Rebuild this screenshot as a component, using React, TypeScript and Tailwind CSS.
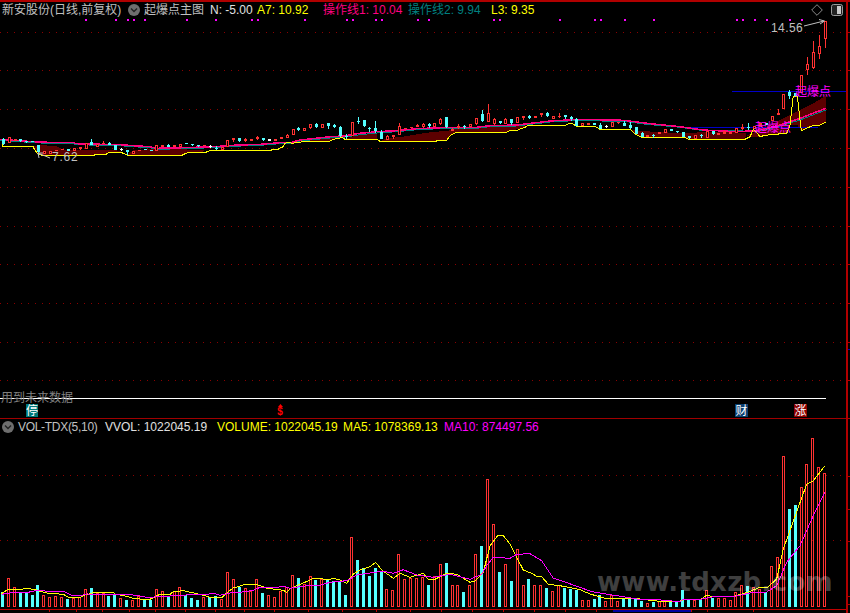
import React from "react";

type C = [string, number, number, number?, number?];
type P = number[];

const pts = (ox: number, oy: number, a: P) => {
  const out: string[] = [];
  for (let i = 0; i < a.length; i += 2) out.push(`${(ox + a[i] / 3).toFixed(1)},${(oy + a[i + 1] / 3).toFixed(1)}`);
  return out;
};
const join3 = (a: P, b: P, c: P) => [...pts(0, 110, a), ...pts(290, 95, b), ...pts(580, 10, c)].join(" ");

const yellowTop = join3(
  [6,100,8,108,99,108,103,118,112,130,125,136,282,136,282,133,318,133,318,130,336,127,362,127,375,132,382,136,546,136,555,131,567,127,620,127,620,124,640,121,815,121,815,118,834,118,834,115,847,113,853,103,860,97,870,97],
  [5,145,33,141,33,138,120,138,130,133,148,130,155,127,165,133,260,133,270,139,440,139,440,136,470,136,480,122,492,115,500,112,650,112,660,107,685,105,695,100,705,97,715,91,825,91,835,87,845,85,858,93,870,95],
  [0,349,45,349,60,358,150,358,165,372,185,382,315,382,325,388,495,388,510,380,520,358,530,367,540,380,555,376,585,373,620,370,630,345,640,258,652,258,660,330,664,362,680,355,695,348,720,345,737,337]
);
const pinkTop = join3(
  [0,88,100,95,145,97,220,97,225,101,360,104,400,107,450,110,470,115,550,113,640,110,700,106,780,103,840,98,870,97],
  [5,142,30,135,60,132,120,125,160,123,210,115,260,110,320,107,380,101,430,99,490,97,560,97,600,92,680,90,780,78,870,73],
  [0,328,130,331,170,336,220,342,300,350,370,360,470,365,530,362,600,345,660,325,737,295]
);
const tealTop = join3(
  [0,91,100,98,145,100,220,100,225,104,360,107,400,110,450,113,470,118,550,116,640,113,700,109,780,106,840,101,870,100],
  [5,145,30,138,60,135,120,129,160,127,210,119,260,114,320,110,380,104,430,102,490,100,560,100,600,95,680,93,780,81,870,76],
  [0,332,130,334,200,343,300,352,380,363,470,362,530,365,600,348,660,330,737,300]
);

const fills: string[] = [
  pts(0, 110, [100,110,115,106,165,107,190,119,340,119,365,125,375,132,362,127,336,127,318,133,282,136,125,136,112,130]).join(" "),
  pts(0, 110, [382,136,400,120,450,118,470,116,550,118,620,122,620,124,567,127,546,136]).join(" "),
  pts(290, 95, [30,137,70,128,120,125,155,125,148,130,120,138,33,138]).join(" "),
  pts(290, 95, [165,132,210,118,260,115,262,133]).join(" "),
  pts(290, 95, [270,139,290,130,340,125,380,118,420,112,440,110,470,108,500,100,650,95,710,93,695,100,660,107,650,112,500,112,480,122,470,136,440,136,440,139]).join(" "),
  pts(580, 10, [150,358,175,362,230,366,320,370,370,366,500,368,495,388,325,388,315,382,185,382,165,372]).join(" "),
  pts(580, 10, [500,376,540,360,600,330,660,300,700,280,737,258,737,337,720,345,695,348,680,355,664,362,652,345,630,345,620,370,585,373,555,376,540,380,510,380]).join(" "),
];

const c1: C[] = [
  ["c",87,103,84,106],["r",82,100],["f",88,94],["c",87,93,87,97],["c",93,97,93,100],["c",93,97],["c",105,125,105,135],["r",124,131],["r",124,131],["f",120,124],["f",117,119],["c",117,122],["r",115,122],["f",112,117,112,120],["r",98,116],["c",97,104,87,104],["r",102,110],["f",98,100,94,100],["c",100,106,97,106],["c",105,120],["w",118,120,115,124],["c",120,125,120,135],["r",123,131],["f",119,124],["c",118,120],["c",120,122],["r",106,124],["f",106,111],["c",106,110,102,110],["f",106,111],["r",103,110],["c",100,103],["c",102,104,102,107],["c",106,108,106,112],["f",106,108],["w",107,108,104,113],["c",113,116,108,120],["r",112,119],["r",90,112],["f",85,91,85,96],["c",83,92,83,96],["f",87,92,84,96],["r",88,94],["f",82,87,78,90],["c",83,89,83,93],["w",86,92],["f",88,92],["f",82,87],["r",76,83,72,83],
];
const c2: C[] = [
  ["r",102,119],["c",100,105,96,109],["r",100,109],["r",88,98,88,101],["c",88,95,84,99],["r",88,100],["c",85,92,85,101],["c",90,95,87,99],["c",97,122,94,125],["c",123,127,117,133],["r",82,124],["c",77,80,66,87],["c",76,92,76,96],["c",98,101,96,112],["c",100,107,78,113],["c",112,132,106,132],["r",123,135,119,135],["r",121,127,121,133],["r",94,119,84,119],["f",98,100,98,102],["f",95,99],["f",90,95,87,95],["r",87,95,84,98],["c",88,93,84,99],["r",85,95],["r",72,87,68,90],["c",67,95,67,99],["r",102,109,98,109],["r",94,100,88,102],["c",94,97,90,101],["r",88,95],["r",70,87,70,90],["c",57,77,45,81],["r",54,80,28,80],["r",72,87,68,90],["c",79,84,79,87],["r",72,87,68,87],["c",72,84,72,90],["r",66,83],["f",64,68,64,74],["c",64,68,60,73],["f",64,68,64,70],["r",55,61,55,66],["c",54,62,50,65],["r",64,73],["f",64,67,55,68],["c",61,66,61,72],["c",67,72,64,79],["c",72,92,69,92],
];
const c3: C[] = [
  ["r",340,347],["f",340,344],["c",340,344],["c",344,356,340,358],["w",348,352,345,355],["r",337,352],["f",337,339,337,342],["c",338,347,334,347],["c",345,355,335,358],["c",351,372],["c",368,381,365,381],["f",375,381],["c",375,378,371,383],["f",366,372],["r",358,368],["c",357,362],["c",363,365,363,368],["c",366,382],["c",378,384,378,387],["r",376,386],["c",374,378,371,383],["r",363,384],["c",364,372,364,375],["f",370,374],["f",363,372],["f",366,372],["r",355,368],["f",351,357,343,360],["c",351,354,340,360],["r",347,358],["f",340,350],["c",340,344],["r",319,334],["f",310,315,298,315],["r",253,298],["c",246,258,240,267],["c",248,258],["r",196,250],["r",163,179,141,195],["r",127,173,94,177],["r",109,131,76,147],["r",34,87,34,114],
];

const cx = (i: number) => Math.round(2.7 + 5.915 * i);
const candles = [
  ...c1.map((c, i) => ({ c, i, oy: 110 })),
  ...c2.map((c, i) => ({ c, i: i + 49, oy: 95 })),
  ...c3.map((c, i) => ({ c, i: i + 98, oy: 10 })),
];

const v1: [string, number][] = [["c",189],["r",145],["r",172],["c",190],["c",190],["c",197],["c",168],["r",196],["r",204],["r",201],["r",204],["c",209],["r",205],["r",203],["r",178],["c",177],["r",192],["r",192],["c",201],["c",195],["r",207],["c",213],["r",213],["r",201],["c",212],["c",212],["r",178],["r",184],["c",201],["r",184],["r",172],["c",196],["c",207],["c",213],["r",204],["c",204],["c",201],["r",210],["r",127],["r",148],["c",172],["r",175],["r",184],["r",148],["c",192],["r",196],["r",202],["r",184],["r",172]];
const v2: [string, number][] = [["r",316],["c",327],["r",343],["r",319],["c",333],["r",330],["c",333],["c",336],["c",339],["c",378],["r",202],["c",273],["c",297],["c",321],["c",297],["c",306],["r",358],["r",361],["r",253],["r",330],["r",327],["r",327],["r",322],["c",348],["r",319],["r",283],["c",282],["r",348],["r",348],["c",369],["r",348],["r",253],["c",231],["r",28],["r",163],["c",309],["r",285],["c",336],["r",240],["r",348],["c",330],["r",346],["r",346],["c",357],["r",366],["r",346],["c",355],["c",360],["c",363]];
const v3: [string, number][] = [["r",511],["r",511],["c",510],["c",498],["r",514],["r",498],["r",514],["c",510],["c",502],["c",510],["c",516],["r",520],["c",519],["r",516],["r",516],["c",519],["c",519],["c",483],["c",513],["r",513],["c",513],["r",481],["c",507],["r",505],["r",505],["r",513],["r",487],["r",466],["c",471],["r",472],["r",480],["c",489],["r",409],["r",382],["r",79],["c",240],["c",228],["r",172],["r",103],["r",25],["r",112],["r",130]];

const vols = [
  ...v1.map(([k, t]) => ({ k, h: (233 - t) / 3 })),
  ...v2.map(([k, t]) => ({ k, h: (413 - t) / 3 })),
  ...v3.map(([k, t]) => ({ k, h: (533 - t) / 3 })),
];
const volX = (i: number) => Math.round(1 + 5.915 * i);

const j = (...parts: string[][]) => parts.flat().join(" ");
const ma5 = j(
  pts(0, 530, [3,195,15,187,25,181,65,181,75,178,90,178,95,181,105,181,120,187,145,193,190,196,205,205,240,205,255,198,285,190,340,190,345,195,375,201,400,208,430,211,450,211,465,203,480,196,510,196,520,188,550,185,585,193,610,199,630,205,665,207,680,192,700,177,740,165,765,165,785,172,800,178,850,184,860,190]),
  pts(290, 470, [0,360,15,352,45,340,70,328,90,328,110,333,130,328,150,333,170,343,190,315,210,303,240,293,257,280,275,303,310,328,330,313,360,325,400,313,415,331,435,331,470,313,500,316,540,340,555,336,580,310,600,230,625,198,640,200,660,225,680,265,700,303,725,313,740,322,755,323,775,346,810,350,860,360]),
  pts(580, 430, [0,482,30,495,75,508,180,510,230,516,300,516,320,510,365,510,380,498,395,503,460,503,510,487,540,475,560,477,590,450,610,360,680,165,700,155,735,110])
);
const ma10 = j(
  pts(0, 530, [5,196,35,191,85,190,110,184,145,187,190,187,215,199,245,199,260,195,340,196,400,198,425,202,445,206,470,203,500,202,530,199,620,196,640,193,660,199,690,192,720,190,760,184,780,175,830,175,850,172]),
  pts(290, 470, [0,358,50,350,85,350,120,340,170,335,200,318,245,311,280,307,310,313,340,302,380,318,430,325,480,316,540,331,575,316,590,290,610,265,660,268,680,256,720,254,755,275,790,328,820,337,860,352]),
  pts(580, 430, [0,475,35,488,110,500,170,510,210,510,300,518,310,510,365,510,400,503,460,503,520,490,560,489,590,470,620,400,660,350,700,260,735,190])
);

const dots = [85,115,127,133,144,186,215,251,257,304,346,352,375,381,417,428,493,499,559,594,600,624,653,736,742,754,766,789,801];
const gridTop = [32, 70, 109, 148, 187, 226, 264, 303, 342, 380];
const gridLow = [476, 541];
const ticksBottom = [49,76,102,129,155,185,215,244,274,308,342,376,410,441,472,503,534,565,596,613,691,707,753];

const CJK = { fontFamily: '"Liberation Sans","Noto Sans CJK SC",sans-serif' };

const Chevron = () => (
  <svg width="12" height="12" viewBox="0 0 12 12" className="shrink-0">
    <circle cx="6" cy="6" r="6" fill="#6e6e6e" />
    <path d="M3 4.5 L6 7.5 L9 4.5" fill="none" stroke="#222" strokeWidth="1.4" />
  </svg>
);

export default function App() {
  return (
    <div className="flex flex-col w-[850px] h-[613px] bg-black overflow-hidden relative text-[12px] leading-none" style={CJK}>
      <div className="h-[2px] w-full bg-[#b00000] shrink-0" />
      <div className="flex flex-1 min-h-0">
        <div className="flex flex-col w-[846px] shrink-0">
          <div className="flex items-center h-[16px] shrink-0 pl-[2px] pr-[3px] text-[#c0c0c0] whitespace-nowrap">
            <span className="w-[126px]">新安股份(日线,前复权)</span>
            <Chevron />
            <span className="ml-[4px] w-[66px]">起爆点主图</span>
            <span className="w-[47px] text-[#e0e0e0]">N: -5.00</span>
            <span className="w-[66px] text-[#ffff00]">A7: 10.92</span>
            <span className="w-[85px] text-[#ff0080]">操作线1: 10.04</span>
            <span className="w-[83px] text-[#008080]">操作线2: 9.94</span>
            <span className="text-[#ffff00]">L3: 9.35</span>
            <span className="ml-auto flex items-center gap-[8px]">
              <svg width="12" height="12" viewBox="0 0 12 12"><path d="M6 .7 L11.3 6 L6 11.3 L.7 6 Z" fill="none" stroke="#8a8a8a" /></svg>
              <svg width="12" height="12" viewBox="0 0 12 12">
                <rect x=".5" y=".5" width="11" height="11" rx="2" fill="#222" stroke="#9a9a9a" />
                <rect x="6" y="2" width="4" height="8" fill="#c8c8c8" />
              </svg>
            </span>
          </div>

          <svg width="846" height="386" viewBox="0 18 846 386" shapeRendering="crispEdges" className="shrink-0 block">
            {dots.map((x) => <rect key={x} x={x} y={19} width={2} height={2} fill="#ff00ff" />)}
            {gridTop.map((y) => <line key={y} x1={0} x2={846} y1={y + 0.5} y2={y + 0.5} stroke="#8c0000" strokeDasharray="1 6" />)}
            {fills.map((f, i) => <polygon key={i} points={f} fill="#5c0000" />)}
            <line x1={732} x2={846} y1={91.5} y2={91.5} stroke="#0000c8" />
            <line x1={690} x2={818} y1={127.5} y2={127.5} stroke="#0000c8" />
            <polyline points={tealTop} fill="none" stroke="#008080" />
            <polyline points={pinkTop} fill="none" stroke="#ff0080" strokeWidth={1.5} />
            <polyline points={yellowTop} fill="none" stroke="#ffff00" />
            {candles.map(({ c, i, oy }) => {
              const [k, a, b, wt, wb] = c;
              const x = cx(i);
              const top = Math.round(oy + a / 3);
              const bot = Math.round(oy + b / 3);
              const wT = Math.round(oy + (wt ?? a) / 3);
              const wB = Math.round(oy + (wb ?? b) / 3);
              const col = k === "c" ? "#54ffff" : k === "w" ? "#ffffff" : "#ff3232";
              return (
                <g key={i}>
                  <rect x={x} y={wT} width={1} height={Math.max(wB - wT, 1)} fill={col} />
                  {k === "r" ? (
                    <rect x={x - 0.5} y={top + 0.5} width={2} height={Math.max(bot - top - 1, 1)} fill="#000" stroke={col} />
                  ) : (
                    <rect x={x - 1} y={top} width={3} height={Math.max(bot - top, 1)} fill={col} />
                  )}
                </g>
              );
            })}
            <g shapeRendering="auto">
              <text x={771} y={32} fontSize={12} fill="#c0c0c0" letterSpacing={0.4}>14.56</text>
              <path d="M804 26 L824 21 M819 19.5 L824.5 21 L820 24" fill="none" stroke="#c0c0c0" />
              <text x={52} y={161} fontSize={12} fill="#c0c0c0" letterSpacing={0.8}>7.62</text>
              <path d="M50 158 L38 153 M39 158 L38 153 L43 153" fill="none" stroke="#c0c0c0" />
              <text x={795} y={96} fontSize={12} fill="#ff00ff">起爆点</text>
              <text x={755} y={132} fontSize={12} fill="#ff00ff">起爆点</text>
            </g>
            <line x1={0} x2={826} y1={398.5} y2={398.5} stroke="#ffffff" />
            <text x={1} y={402} fontSize={12} fill="#808080" shapeRendering="auto">用到未来数据</text>
          </svg>

          <div className="flex h-[14px] shrink-0 font-bold">
            <span className="ml-[26px] w-[12px] h-[13px] bg-[#007878] text-white flex items-center justify-center font-normal">停</span>
            <span className="ml-[237px] w-[10px] text-[#ff0000] flex flex-col items-center text-[10px] leading-none">
              <svg width="5" height="3" viewBox="0 0 5 3"><path d="M2.5 0 L5 3 L0 3 Z" fill="#ff0000" /></svg>
              <span>$</span>
            </span>
            <span className="ml-[450px] w-[13px] h-[13px] bg-[#0a3e6e] text-white flex items-center justify-center font-normal">财</span>
            <span className="ml-[46px] w-[13px] h-[13px] bg-[#8c0000] text-white flex items-center justify-center font-normal">涨</span>
          </div>
          <div className="h-[1px] bg-[#a00000] shrink-0" />

          <div className="flex items-center h-[14px] shrink-0 pl-[2px] whitespace-nowrap text-[#c0c0c0] mt-[1px]">
            <Chevron />
            <span className="ml-[4px] w-[87px] tracking-[-0.3px]">VOL-TDX(5,10)</span>
            <span className="w-[112px] text-[#e0e0e0]">VVOL: 1022045.19</span>
            <span className="w-[126px] text-[#ffff00]">VOLUME: 1022045.19</span>
            <span className="w-[101px] text-[#ffff00]">MA5: 1078369.13</span>
            <span className="text-[#ff00ff]">MA10: 874497.56</span>
          </div>

          <svg width="846" height="178" viewBox="0 435 846 178" shapeRendering="crispEdges" className="shrink-0 block">
            {gridLow.map((y) => <line key={y} x1={0} x2={846} y1={y + 0.5} y2={y + 0.5} stroke="#8c0000" strokeDasharray="1 6" />)}
            {vols.map((v, i) => {
              const x = volX(i);
              const h = Math.max(Math.round(v.h), 1);
              return v.k === "c" ? (
                <rect key={i} x={x} y={608 - h} width={3} height={h} fill="#54ffff" />
              ) : (
                <rect key={i} x={x + 0.5} y={608.5 - h} width={2} height={h - 1} fill="none" stroke="#ff3232" />
              );
            })}
            <polyline points={ma5} fill="none" stroke="#ffff00" />
            <polyline points={ma10} fill="none" stroke="#ff00ff" />
            <rect x={0} y={610} width={846} height={1} fill="#c00000" />
            {ticksBottom.map((x) => <rect key={x} x={x} y={611} width={1} height={2} fill="#c00000" />)}
            <rect x={613} y={611} width={78} height={2} fill="#0000a0" />
          </svg>
        </div>

        <div className="flex-1 min-w-0">
          <svg width="4" height="611" viewBox="0 2 4 611" shapeRendering="crispEdges" className="block">
            <rect x={0} y={2} width={2} height={611} fill="#b00000" />
            {[...gridTop, 418, 476, 509, 541, 596, 604].map((y) => <rect key={y} x={2} y={y} width={2} height={1} fill="#b00000" />)}
            <rect x={2} y={349} width={2} height={1} fill="#0000c8" />
          </svg>
        </div>
      </div>

      <div className="absolute left-[597px] top-[569px] text-[26px] tracking-[0.3px] leading-none font-bold text-white/25 whitespace-nowrap" style={{ fontFamily: '"DejaVu Sans",sans-serif' }}>
        www.tdxzb.com
      </div>
    </div>
  );
}
